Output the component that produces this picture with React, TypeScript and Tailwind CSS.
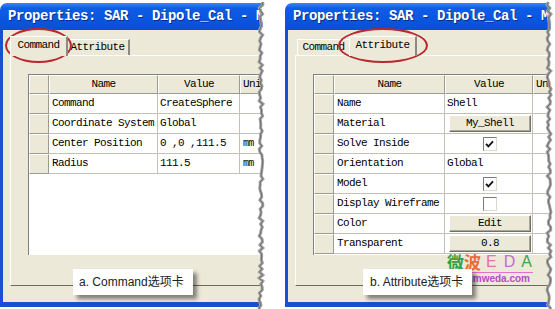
import type { ReactNode } from 'react';

const mono = "font-['Liberation_Mono','DejaVu_Sans_Mono',monospace] text-[11px] tracking-[-0.6px] leading-none text-black";
const sans = "font-['Liberation_Sans','Noto_Sans_CJK_SC',sans-serif]";

type GridRow = { name: string; value: ReactNode; unit?: string };

type TabDef = { label: string; active?: boolean; w: string };

function Button({ label }: { label: string }) {
  return (
    <div className="ml-[2px] mr-[1px] flex h-[17px] flex-1 items-center justify-center border border-t-white border-l-white border-r-[#716f64] border-b-[#716f64] bg-[#ece9d8] shadow-[inset_-1px_-1px_0_#aca899]">
      {label}
    </div>
  );
}

function Check({ on }: { on?: boolean }) {
  return (
    <div className="mx-auto flex h-[14px] w-[14px] items-center justify-center border border-t-[#7a7a7a] border-l-[#7a7a7a] border-r-[#dcd9cc] border-b-[#dcd9cc] bg-white">
      {on && (
        <svg width="9" height="8" viewBox="0 0 9 8">
          <path d="M1 3.8 L3.4 6.4 L8 1.4" fill="none" stroke="#111" strokeWidth="1.8" />
        </svg>
      )}
    </div>
  );
}

function Tab({ label, active, w }: TabDef) {
  return (
    <div
      className={`${w} flex items-center justify-center border-t border-l border-white border-r-2 border-r-[#8c8a7e] bg-[#ece9d8] ${
        active ? 'relative z-10 -mx-[2px] -mb-px h-[20px] pb-[2px]' : 'h-[16px]'
      }`}
    >
      <span className={mono}>{label}</span>
    </div>
  );
}

function Window({
  tabs,
  rows,
  nameW,
  valueW,
}: {
  tabs: TabDef[];
  rows: GridRow[];
  nameW: string;
  valueW: string;
}) {
  return (
    <div className="mt-[3px] flex h-[304px] w-[300px] flex-col">
      <div className="flex h-[27px] items-center rounded-tl-[7px] bg-[linear-gradient(180deg,#3a86f4_0%,#0e5de6_20%,#0a55de_65%,#0a4fd2_100%)] pl-[8px]">
        <span className="whitespace-nowrap font-['Liberation_Mono','DejaVu_Sans_Mono',monospace] text-[14px] font-bold tracking-[-0.4px] text-white [text-shadow:1px_1px_0_#0a2a8a]">
          Properties: SAR - Dipole_Cal - Model
        </span>
      </div>
      <div className="flex-1 border-b-[5px] border-l-[3px] border-[#1a4fd4] bg-[#ece9d8] pt-[6px]">
        <div className="flex h-[19px] items-end pl-[9px]">
          {tabs.map((t) => (
            <Tab key={t.label} {...t} />
          ))}
        </div>
        <div className="ml-[7px] h-[231px] border-t border-l border-white border-b border-b-[#6b6a5e] pl-[17px] pt-[18px]">
          <div className="flex h-[181px] flex-col border-t border-l border-[#808080] bg-white">
            <div className="flex h-[19px]">
              <div className="h-full w-[20px] border-t border-l border-white border-r border-b border-r-[#9d9b8f] border-b-[#9d9b8f] bg-[#ece9d8]" />
              <div className={`${nameW} flex h-full items-center justify-center border-t border-l border-white border-r border-b border-r-[#9d9b8f] border-b-[#9d9b8f] bg-[#ece9d8]`}>
                <span className={mono}>Name</span>
              </div>
              <div className={`${valueW} flex h-full items-center justify-center border-t border-l border-white border-r border-b border-r-[#9d9b8f] border-b-[#9d9b8f] bg-[#ece9d8]`}>
                <span className={mono}>Value</span>
              </div>
              <div className="flex h-full flex-1 items-center border-t border-l border-white border-b border-b-[#9d9b8f] bg-[#ece9d8] pl-[2px]">
                <span className={mono}>Units</span>
              </div>
            </div>
            {rows.map((r) => (
              <div key={r.name} className="flex h-[20px]">
                <div className="h-full w-[20px] border-t border-l border-white border-r border-b border-r-[#9d9b8f] border-b-[#9d9b8f] bg-[#ece9d8]" />
                <div className={`${nameW} flex h-full items-center border-r border-b border-[#c4c2b8] pl-[3px]`}>
                  <span className={mono}>{r.name}</span>
                </div>
                <div className={`${valueW} flex h-full items-center border-r border-b border-[#c4c2b8] pl-[2px] ${mono}`}>
                  {r.value}
                </div>
                <div className="flex h-full flex-1 items-center border-b border-[#c4c2b8] pl-[3px]">
                  <span className="font-['Liberation_Mono',monospace] text-[10px] tracking-[-0.8px] text-black">{r.unit}</span>
                </div>
              </div>
            ))}
          </div>
        </div>
      </div>
    </div>
  );
}

function TornEdge({ seed, left }: { seed: number; left: string }) {
  let s = seed;
  const pts: [number, number][] = [];
  for (let y = 2; y <= 312; y += 3) {
    s = (s * 9301 + 49297) % 233280;
    pts.push([3 + (s / 233280) * 4, y]);
  }
  const line = pts.map(([x, y]) => `${x.toFixed(1)},${y}`).join(' ');
  const fill = pts.map(([x, y]) => `${(x + 1.5).toFixed(1)},${y}`).join(' ') + ' 16,312 16,0 4,0';
  return (
    <svg className={`absolute top-0 ${left} h-[309px] w-[16px]`} viewBox="0 0 16 309">
      <polygon points={fill} fill="#fff" />
      <polyline points={line} fill="none" stroke="#a3a3a3" strokeWidth="3" />
      <polyline points={line} fill="none" stroke="#6e6e6e" strokeWidth="1" />
    </svg>
  );
}

function Caption({ text, pos }: { text: string; pos: string }) {
  return (
    <div
      className={`absolute ${pos} flex h-[26px] items-center bg-white text-[12px] text-[#222] shadow-[4px_4px_4px_rgba(0,0,0,0.45)] ${sans}`}
    >
      {text}
    </div>
  );
}

export default function App() {
  const leftRows: GridRow[] = [
    { name: 'Command', value: 'CreateSphere' },
    { name: 'Coordinate System', value: 'Global' },
    { name: 'Center Position', value: '0 ,0 ,111.5', unit: 'mm' },
    { name: 'Radius', value: '111.5', unit: 'mm' },
  ];

  const rightRows: GridRow[] = [
    { name: 'Name', value: 'Shell' },
    { name: 'Material', value: <Button label="My_Shell" /> },
    { name: 'Solve Inside', value: <Check on /> },
    { name: 'Orientation', value: 'Global' },
    { name: 'Model', value: <Check on /> },
    { name: 'Display Wireframe', value: <Check /> },
    { name: 'Color', value: <Button label="Edit" /> },
    { name: 'Transparent', value: <Button label="0.8" /> },
  ];

  return (
    <div className="flex h-[309px] w-[555px] overflow-hidden bg-white">
      <div className="relative h-full w-[268px] shrink-0 overflow-hidden">
        <Window
          tabs={[
            { label: 'Command', active: true, w: 'w-[58px]' },
            { label: 'Attribute', w: 'w-[64px]' },
          ]}
          rows={leftRows}
          nameW="w-[109px]"
          valueW="w-[82px]"
        />
        <div className="absolute left-[5px] top-[28px] h-[35px] w-[67px] rounded-[50%] border-2 border-[#b8282e]" />
        <Caption text="a. Command选项卡" pos="left-[73px] top-[269px] w-[120px] pl-[6px]" />
        <TornEdge seed={17} left="left-[256px]" />
      </div>
      <div className="w-[17px] shrink-0" />
      <div className="relative h-full w-[270px] shrink-0 overflow-hidden">
        <Window
          tabs={[
            { label: 'Command', w: 'w-[54px]' },
            { label: 'Attribute', active: true, w: 'w-[68px]' },
          ]}
          rows={rightRows}
          nameW="w-[111px]"
          valueW="w-[88px]"
        />
        <div className="absolute left-[53px] top-[28px] h-[35px] w-[90px] rounded-[50%] border-2 border-[#b8282e]" />
        <div className="absolute left-[162px] top-[249px] w-[86px]">
          <div className="flex h-[21px] items-end leading-none">
            <span className="font-['Noto_Sans_CJK_SC',sans-serif] text-[17px] font-bold text-[#34a043]">微</span>
            <span className="font-['Noto_Sans_CJK_SC',sans-serif] text-[17px] font-bold text-[#ee6a3a]">波</span>
            <span className={`ml-[5px] text-[16px] text-[#e46fb2] ${sans}`}>E</span>
            <span className={`ml-[7px] text-[16px] text-[#c56ad0] ${sans}`}>D</span>
            <span className={`ml-[6px] text-[16px] text-[#3ea64a] ${sans}`}>A</span>
          </div>
          <div className="mt-[2px] h-px bg-[#e070c8]" />
          <div className={`mt-px text-[10px] font-bold leading-none text-[#b64cc6] ${sans}`}>www.mweda.com</div>
        </div>
        <Caption text="b. Attribute选项卡" pos="left-[78px] top-[269px] w-[109px] pl-[7px]" />
        <TornEdge seed={53} left="left-[259px]" />
      </div>
    </div>
  );
}
